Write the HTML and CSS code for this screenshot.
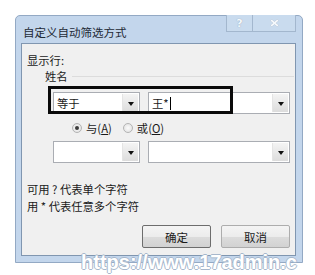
FILE: index.html
```html
<!DOCTYPE html>
<html>
<head>
<meta charset="utf-8">
<link rel="stylesheet" href="styles.css">
</head>
<body>
<div class="dialog">
  <div class="titlebar">
    <span class="title">自定义自动筛选方式</span>
    <div class="tbtns">
      <span class="tbtn help">?</span>
      <span class="tbtn close">
        <svg width="9" height="8" viewBox="0 0 9 8"><path d="M1 1 L8 7 M8 1 L1 7" stroke="#fff" stroke-width="2"/></svg>
      </span>
    </div>
  </div>
  <div class="client">
    <div class="lbl">显示行:</div>
    <div class="group"><span>姓名</span><span class="sep"></span></div>
    <div class="row r1">
      <div class="combo c-op"><span class="val">等于</span><span class="drop"><i class="tri"></i></span></div>
      <div class="combo c-val"><span class="val">王*<b class="caret"></b></span><span class="drop"><i class="tri"></i></span></div>
    </div>
    <div class="radios">
      <span class="radio on"></span><span class="rl">与(<u>A</u>)</span>
      <span class="radio"></span><span class="rl">或(<u>O</u>)</span>
    </div>
    <div class="row r2">
      <div class="combo c-op"><span class="val"></span><span class="drop"><i class="tri"></i></span></div>
      <div class="combo c-val"><span class="val"></span><span class="drop"><i class="tri"></i></span></div>
    </div>
    <div class="hint h1">可用&nbsp;?&nbsp;代表单个字符</div>
    <div class="hint">用&nbsp;*&nbsp;代表任意多个字符</div>
    <div class="btns">
      <span class="btn ok">确定</span>
      <span class="btn cancel">取消</span>
    </div>
    <div class="mark"></div>
  </div>
</div>
<div class="wm">https://www.17admin.c</div>
</body>
</html>
```
FILE: styles.css
```css
html, body {
  margin: 0;
  padding: 0;
  background: #ffffff;
  width: 315px;
  height: 275px;
  overflow: hidden;
  position: relative;
  font-family: "Noto Sans CJK SC", "Noto Sans", sans-serif;
  color: #1a1a1a;
}
.dialog {
  margin: 15px 0 0 15px;
  width: 288px;
  height: 248px;
  box-sizing: border-box;
  border: 1px solid #93a9c4;
  border-radius: 5px 5px 0 0;
  background: #c3d6ec;
  padding: 0 6px 6px 5px;
  display: flex;
  flex-direction: column;
}
.titlebar {
  height: 27px;
  display: flex;
  justify-content: space-between;
  align-items: flex-start;
}
.title {
  font-size: 11.5px;
  line-height: 14px;
  margin: 9px 0 0 2px;
  color: #1e2a36;
}
.tbtns {
  display: flex;
  margin-top: -1px;
}
.tbtn {
  height: 17px;
  border: 1px solid #a3b7ce;
  border-top: none;
  background: #c9dbee;
  display: flex;
  align-items: center;
  justify-content: center;
  box-sizing: border-box;
}
.help {
  width: 26px;
  font-size: 11px;
  color: #f4f8fc;
  font-family: "DejaVu Sans", sans-serif;
  font-weight: bold;
  text-shadow: 0 0 1px #7f93ab;
  border-right: none;
}
.close {
  width: 44px;
}
.close svg path { stroke: #f6f9fc; }
.close svg { filter: drop-shadow(0 0 0.6px #7a8ea6); }
.client {
  flex: 1;
  background: #f0f0f0;
  border: 1px solid #8096b0;
  position: relative;
  font-size: 11.3px;
  display: flex;
  flex-direction: column;
}
.lbl {
  margin: 8px 0 0 5px;
  height: 16px;
  line-height: 16px;
}
.group {
  height: 16px;
  line-height: 16px;
  display: flex;
  align-items: center;
  margin-left: 23px;
}
.sep {
  flex: 1;
  height: 1px;
  background: #dcdcdc;
  margin: 1px 1px 0 4px;
}
.row {
  display: flex;
  height: 22px;
  padding-left: 31px;
  gap: 8px;
}
.r1 { margin-top: 8px; }
.r2 { margin-top: 6px; }
.combo {
  box-sizing: border-box;
  height: 22px;
  background: #fff;
  border: 1px solid #aaadb3;
  display: flex;
  align-items: stretch;
}
.c-op { width: 87px; }
.c-val { width: 142px; }
.val {
  flex: 1;
  padding-left: 3px;
  line-height: 20px;
  font-size: 11.3px;
  display: flex;
  align-items: center;
}
.caret {
  display: inline-block;
  width: 1px;
  height: 13px;
  background: #000;
  margin-left: 1px;
}
.drop {
  width: 15px;
  margin: 1px;
  background: linear-gradient(#f4f4f4, #dcdcdc);
  border-left: 1px solid #e4e4e4;
  display: flex;
  align-items: center;
  justify-content: center;
}
.tri {
  width: 0;
  height: 0;
  border-left: 3px solid transparent;
  border-right: 3px solid transparent;
  border-top: 4px solid #111;
  margin-top: 2px;
}
.radios {
  margin-top: 7px;
  height: 14px;
  display: flex;
  align-items: center;
  padding-left: 50px;
}
.radio {
  width: 10px;
  height: 10px;
  border-radius: 50%;
  box-sizing: border-box;
  border: 1px solid #b4b4b4;
  background: radial-gradient(circle, #fbfbfb 0, #dedede 100%);
  margin-right: 4px;
  position: relative;
}
.radio.on::after {
  content: "";
  position: absolute;
  left: 2px;
  top: 2px;
  width: 4px;
  height: 4px;
  border-radius: 50%;
  background: #3c3c3c;
}
.rl { margin-right: 11px; }
.hint {
  height: 17px;
  line-height: 17px;
  margin-left: 5px;
}
.h1 { margin-top: 18px; }
.btns {
  margin-top: 10px;
  display: flex;
  padding-left: 120px;
  gap: 10px;
}
.btn {
  box-sizing: border-box;
  height: 23px;
  border: 1px solid #7a7a7a;
  border-radius: 2px;
  background: linear-gradient(#f4f4f4 0%, #ececec 50%, #dcdcdc 51%, #d2d2d2 100%);
  display: flex;
  align-items: center;
  justify-content: center;
  font-size: 11.5px;
}
.ok { width: 69px; border-color: #6d6d6d; }
.cancel { width: 69px; border-color: #adadad; }
.mark {
  position: absolute;
  left: 26px;
  top: 42px;
  width: 185px;
  height: 28px;
  box-sizing: border-box;
  border: 3px solid #0a0a0a;
}
.wm {
  position: absolute;
  left: 81px;
  top: 251px;
  font-family: "Liberation Sans", sans-serif;
  font-weight: bold;
  font-size: 20px;
  line-height: 22px;
  color: #ffffff;
  white-space: nowrap;
  text-shadow: 1px 0 0 #a7b8cc, -1px 0 0 #a7b8cc, 0 1px 0 #a7b8cc, 0 -1px 0 #a7b8cc;
}
```
